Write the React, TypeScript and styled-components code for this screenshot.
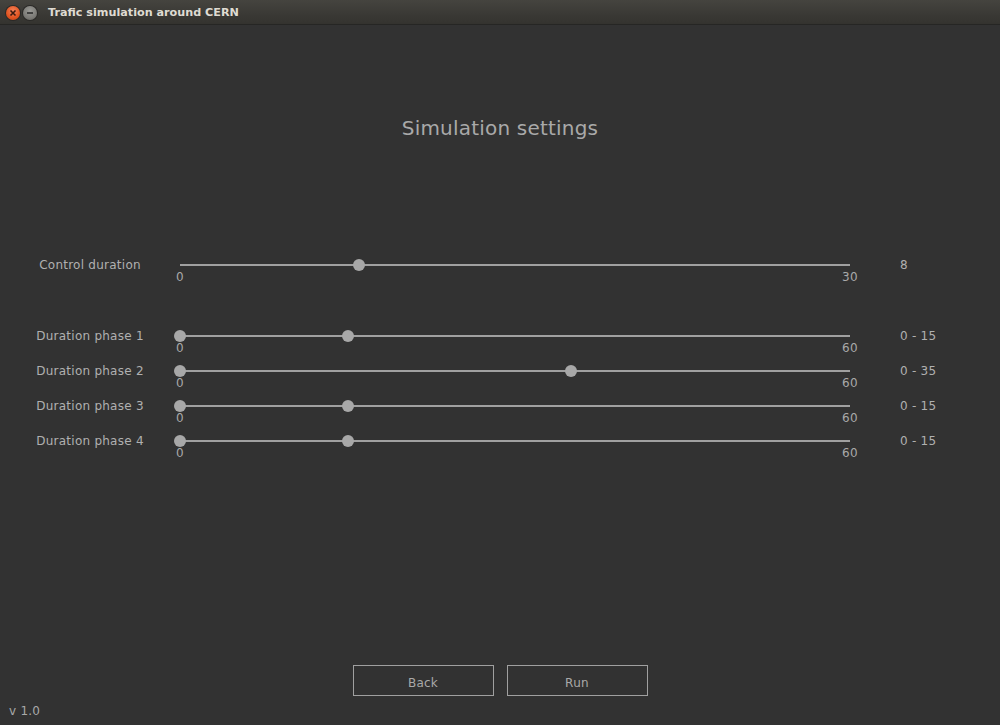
import React from 'react';
import styled, { createGlobalStyle } from 'styled-components';

const GlobalStyle = createGlobalStyle`
    html, body {
        margin: 0;
        padding: 0;
        background: #323232;
    }
    body {
        font-family: "DejaVu Sans", Verdana, sans-serif;
    }
`;

interface ISliderRow {
    label: string;
    min: number;
    max: number;
    values: number[];
}

const controlRow: ISliderRow = { label: 'Control duration', min: 0, max: 30, values: [8] };

const phaseRows: ISliderRow[] = [
    { label: 'Duration phase 1', min: 0, max: 60, values: [0, 15] },
    { label: 'Duration phase 2', min: 0, max: 60, values: [0, 35] },
    { label: 'Duration phase 3', min: 0, max: 60, values: [0, 15] },
    { label: 'Duration phase 4', min: 0, max: 60, values: [0, 15] },
];

const Slider = ({ label, min, max, values }: ISliderRow) => {
    const pct = (v: number) => ((v - min) / (max - min)) * 100;
    return (
        <Row>
            <RowLabel>{label}</RowLabel>
            <TrackArea>
                <Track>
                    {values.map((v, key) => (
                        <Thumb key={key} style={{ left: `${pct(v)}%` }} />
                    ))}
                </Track>
                <Ticks>
                    <Tick>{min}</Tick>
                    <Tick>{max}</Tick>
                </Ticks>
            </TrackArea>
            <RowValue>{values.length > 1 ? values.join(' - ') : values[0]}</RowValue>
        </Row>
    );
};

const App = () => {
    return (
        <Window>
            <GlobalStyle />
            <TitleBar>
                <WinButton kind="close">
                    <svg width="8" height="8" viewBox="0 0 8 8">
                        <path d="M1.5 1.5 L6.5 6.5 M6.5 1.5 L1.5 6.5" stroke="#3a1a10" strokeWidth="1.6" />
                    </svg>
                </WinButton>
                <WinButton kind="min">
                    <svg width="8" height="8" viewBox="0 0 8 8">
                        <path d="M1 4 H7" stroke="#2e2e2e" strokeWidth="1.6" />
                    </svg>
                </WinButton>
                <WinTitle>Trafic simulation around CERN</WinTitle>
            </TitleBar>
            <Content>
                <Heading>Simulation settings</Heading>
                <Sliders>
                    <Slider {...controlRow} />
                    <PhaseGroup>
                        {phaseRows.map((o, key) => <Slider key={key} {...o} />)}
                    </PhaseGroup>
                </Sliders>
                <Spacer />
                <ButtonRow>
                    <Button>Back</Button>
                    <Button>Run</Button>
                </ButtonRow>
                <Version>v 1.0</Version>
            </Content>
        </Window>
    );
};

export default App;

const Window = styled.div`
    width: 100%;
    height: 100vh;
    display: flex;
    flex-direction: column;
    background: #323232;
    color: #a9a9a9;
    overflow: hidden;
`;

const TitleBar = styled.div`
    height: 25px;
    flex-shrink: 0;
    display: flex;
    align-items: center;
    padding: 1px 0 0 6px;
    gap: 3px;
    background: linear-gradient(#45443f, #3a3935 60%, #34332f);
    border-bottom: 1px solid #262624;
    box-sizing: border-box;
`;

const WinButton = styled.div<{ kind: 'close' | 'min' }>`
    width: 14px;
    height: 14px;
    border-radius: 50%;
    display: flex;
    align-items: center;
    justify-content: center;
    background: ${p => p.kind === 'close'
        ? 'radial-gradient(circle at 50% 35%, #f5835c, #e0531f 60%, #b8401a)'
        : 'radial-gradient(circle at 50% 35%, #9a9a96, #7c7b77 60%, #5e5d59)'};
    box-shadow: 0 0 0 1px #2a2927;
`;

const WinTitle = styled.span`
    margin-left: 8px;
    font-family: "DejaVu Sans", sans-serif;
    font-weight: bold;
    font-size: 11.2px;
    color: #dfdbd2;
`;

const Content = styled.div`
    flex: 1;
    display: flex;
    flex-direction: column;
    padding-top: 91px;
`;

const Heading = styled.h1`
    margin: 0;
    text-align: center;
    font-weight: normal;
    font-size: 20px;
    line-height: 24px;
    letter-spacing: 0.2px;
    color: #a9a9a9;
`;

const Sliders = styled.div`
    margin-top: 119px;
    display: flex;
    flex-direction: column;
    gap: 36px;
`;

const PhaseGroup = styled.div`
    display: flex;
    flex-direction: column;
`;

const Row = styled.div`
    display: grid;
    grid-template-columns: 180px 670px 1fr;
    height: 35px;
    font-size: 12px;
    line-height: 12px;
    letter-spacing: 0.25px;
`;

const RowLabel = styled.div`
    text-align: center;
    color: #b0b0b0;
`;

const RowValue = styled.div`
    padding-left: 50px;
    color: #b0b0b0;
`;

const TrackArea = styled.div`
    display: flex;
    flex-direction: column;
`;

const Track = styled.div`
    position: relative;
    height: 12px;
    &::before {
        content: '';
        position: absolute;
        left: 0;
        right: 0;
        top: 5px;
        height: 2px;
        background: #a0a0a0;
    }
`;

const Thumb = styled.div`
    position: absolute;
    top: 0;
    width: 12px;
    height: 12px;
    margin-left: -6px;
    border-radius: 50%;
    background: #a8a8a8;
`;

const Ticks = styled.div`
    display: flex;
    justify-content: space-between;
    margin: 0 -9px;
    font-size: 12px;
    line-height: 12px;
    color: #a9a9a9;
`;

const Tick = styled.span`
    min-width: 18px;
    text-align: center;
`;

const Spacer = styled.div`
    flex: 1;
`;

const ButtonRow = styled.div`
    display: flex;
    justify-content: center;
    gap: 13px;
`;

const Button = styled.button`
    width: 141px;
    height: 31px;
    padding: 5px 0 0;
    background: transparent;
    border: 1px solid #a0a0a0;
    color: #a9a9a9;
    font-family: "DejaVu Sans", sans-serif;
    font-size: 12px;
    letter-spacing: 0.25px;
    cursor: pointer;
`;

const Version = styled.div`
    margin-top: 8px;
    padding: 0 0 7px 9px;
    font-size: 12px;
    line-height: 14px;
    letter-spacing: 0.25px;
    color: #a9a9a9;
`;
